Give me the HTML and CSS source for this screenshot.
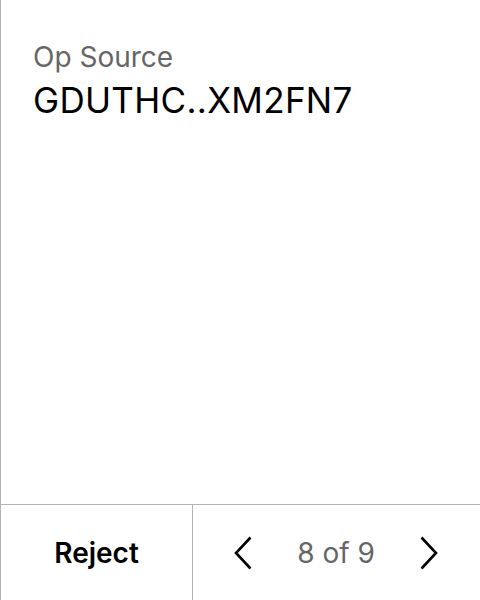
FILE: index.html
```html
<!DOCTYPE html>
<html>
<head>
<meta charset="utf-8">
<link rel="stylesheet" href="styles.css">
</head>
<body>
<div class="screen">
  <div class="content">
    <div class="label">Op Source</div>
    <div class="value">GDUTHC..XM2FN7</div>
  </div>
  <div class="footer">
    <div class="reject">Reject</div>
    <div class="pager">
      <svg class="chev" width="18" height="34" viewBox="0 0 18 34"><path d="M16.5 1.5 L2 17 L16.5 32.5" fill="none" stroke="#000" stroke-width="2.6"/></svg>
      <span class="count">8 of 9</span>
      <svg class="chev" width="18" height="34" viewBox="0 0 18 34"><path d="M1.5 1.5 L16 17 L1.5 32.5" fill="none" stroke="#000" stroke-width="2.6"/></svg>
    </div>
  </div>
</div>
</body>
</html>
```
FILE: styles.css
```css
html, body {
  margin: 0;
  padding: 0;
  background: #fff;
}
body {
  font-family: Inter, "Noto Sans", sans-serif;
}
.screen {
  width: 479px;
  height: 600px;
  border-left: 1px solid #b3b3b3;
  display: flex;
  flex-direction: column;
}
.content {
  flex: 1;
  padding: 40px 0 0 32px;
}
.label {
  font-size: 28px;
  line-height: 34px;
  color: #666;
}
.value {
  font-size: 35px;
  line-height: 42px;
  letter-spacing: 0.3px;
  color: #000;
  margin-top: 5px;
}
.footer {
  height: 95px;
  border-top: 1px solid #b3b3b3;
  display: flex;
}
.reject {
  width: 191px;
  border-right: 1px solid #b3b3b3;
  display: flex;
  align-items: center;
  justify-content: center;
  font-size: 28px;
  font-weight: 600;
  color: #000;
}
.pager {
  flex: 1;
  display: flex;
  align-items: center;
  justify-content: space-between;
  padding: 0 42px 0 41px;
}
.count {
  font-size: 28px;
  color: #666;
}
.chev {
  display: block;
}
```
